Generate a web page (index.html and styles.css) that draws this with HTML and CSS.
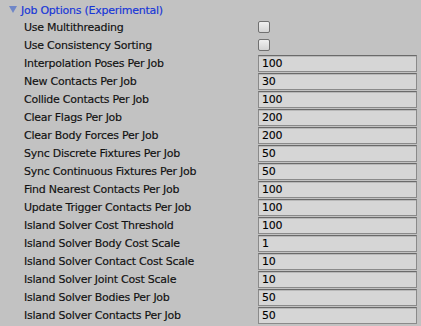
FILE: index.html
```html
<!DOCTYPE html>
<html>
<head>
<meta charset="utf-8">
<link rel="stylesheet" href="styles.css">
</head>
<body>
<div class="panel">
  <div class="header">
    <svg class="tri" width="8" height="7" viewBox="0 0 8 7"><polygon points="0,0 8,0 4,7" fill="#6f86c8"/></svg>
    <span class="title">Job Options (Experimental)</span>
  </div>
  <div class="row"><span class="label">Use Multithreading</span><span class="check"></span></div>
  <div class="row"><span class="label">Use Consistency Sorting</span><span class="check"></span></div>
  <div class="row"><span class="label">Interpolation Poses Per Job</span><span class="field">100</span></div>
  <div class="row"><span class="label">New Contacts Per Job</span><span class="field">30</span></div>
  <div class="row"><span class="label">Collide Contacts Per Job</span><span class="field">100</span></div>
  <div class="row"><span class="label">Clear Flags Per Job</span><span class="field">200</span></div>
  <div class="row"><span class="label">Clear Body Forces Per Job</span><span class="field">200</span></div>
  <div class="row"><span class="label">Sync Discrete Fixtures Per Job</span><span class="field">50</span></div>
  <div class="row"><span class="label">Sync Continuous Fixtures Per Job</span><span class="field">50</span></div>
  <div class="row"><span class="label">Find Nearest Contacts Per Job</span><span class="field">100</span></div>
  <div class="row"><span class="label">Update Trigger Contacts Per Job</span><span class="field">100</span></div>
  <div class="row"><span class="label">Island Solver Cost Threshold</span><span class="field">100</span></div>
  <div class="row"><span class="label">Island Solver Body Cost Scale</span><span class="field">1</span></div>
  <div class="row"><span class="label">Island Solver Contact Cost Scale</span><span class="field">10</span></div>
  <div class="row"><span class="label">Island Solver Joint Cost Scale</span><span class="field">10</span></div>
  <div class="row"><span class="label">Island Solver Bodies Per Job</span><span class="field">50</span></div>
  <div class="row"><span class="label">Island Solver Contacts Per Job</span><span class="field">50</span></div>
</div>
</body>
</html>
```
FILE: styles.css
```css
html, body {
  margin: 0;
  padding: 0;
  background: #c2c2c2;
}
body {
  width: 421px;
  height: 326px;
  overflow: hidden;
  font-family: "DejaVu Sans", sans-serif;
  font-size: 11px;
  letter-spacing: -0.25px;
  color: #111;
  -webkit-text-stroke: 0.15px #111;
}
.panel {
  display: flex;
  flex-direction: column;
}
.header {
  height: 18px;
  display: flex;
  align-items: center;
  padding-left: 9px;
  padding-top: 3px;
  box-sizing: border-box;
}
.tri {
  margin-right: 4px;
  margin-top: -3px;
}
.title {
  color: #1736d8;
  -webkit-text-stroke: 0.15px #1736d8;
}
.row {
  height: 18px;
  display: flex;
  align-items: center;
}
.label {
  width: 258px;
  padding-left: 24px;
  box-sizing: border-box;
  white-space: nowrap;
}
.check {
  width: 12px;
  height: 12px;
  box-sizing: border-box;
  border: 1px solid #707070;
  border-radius: 2px;
  background: linear-gradient(#f0f0f0, #d4d4d4);
}
.field {
  width: 159px;
  height: 17px;
  box-sizing: border-box;
  border: 1px solid #8a8a8a;
  border-top-color: #6a6a6a;
  background: #d6d6d6;
  box-shadow: inset 0 1px 0 #b8b8b8;
  padding-left: 3px;
  line-height: 15px;
  color: #000;
  -webkit-text-stroke: 0.1px #000;
}
```
